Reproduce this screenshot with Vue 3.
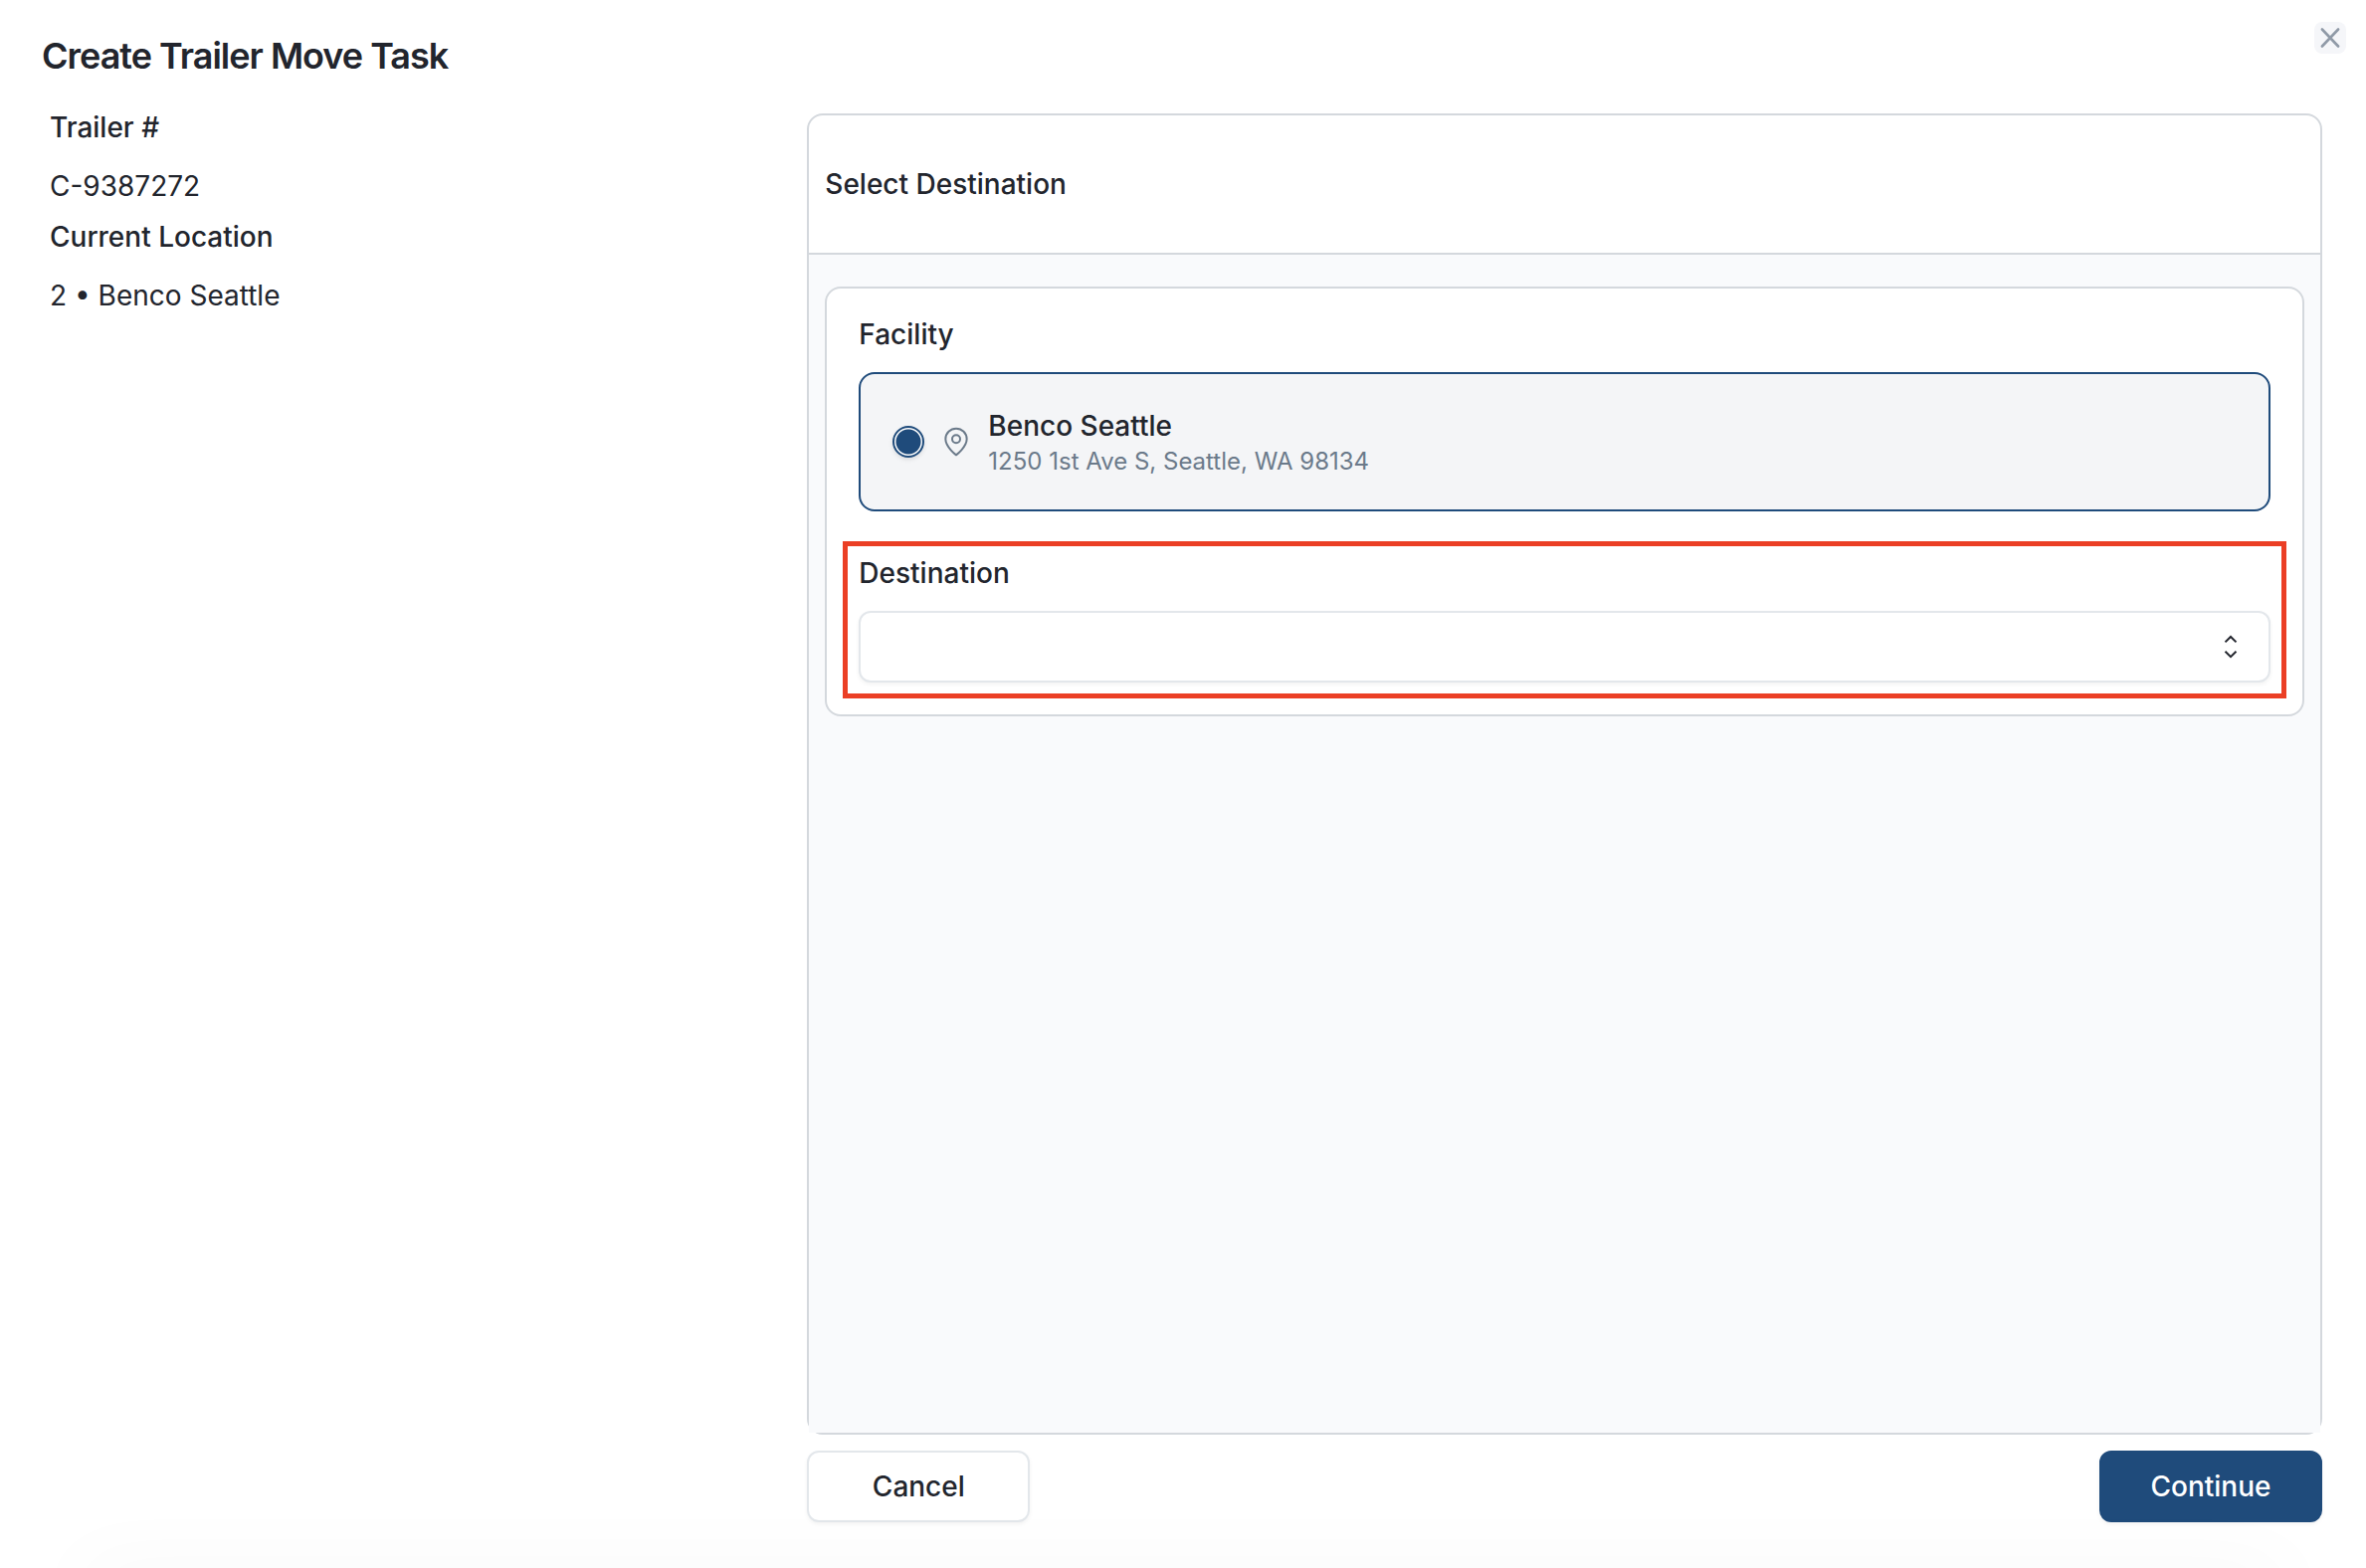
<script setup>
  import { ref } from 'vue'

  const trailer = {
    number: 'C-9387272',
    location: '2 • Benco Seattle'
  }

  const facilities = [
    { id: 1, name: 'Benco Seattle', address: '1250 1st Ave S, Seattle, WA 98134' }
  ]

  const selectedFacility = ref(1)
  const destination = ref('')
</script>

<template>
  <main class="dialog">
    <button class="close" type="button" aria-label="Close">
      <svg viewBox="0 0 32 32" fill="none" stroke="currentColor" stroke-width="2.6" stroke-linecap="round">
        <path d="M7.9 7.5 L24.1 24.5 M24.1 7.5 L7.9 24.5" />
      </svg>
    </button>

    <h1>Create Trailer Move Task</h1>

    <div class="columns">
      <dl class="details">
        <dt>Trailer #</dt>
        <dd>{{ trailer.number }}</dd>
        <dt>Current Location</dt>
        <dd>{{ trailer.location }}</dd>
      </dl>

      <form class="form" @submit.prevent>
        <section class="panel">
          <h2>Select Destination</h2>

          <div class="panel-body">
            <div class="card">
              <h3>Facility</h3>
              <label
                v-for="facility in facilities"
                :key="facility.id"
                class="facility"
                :class="{ selected: facility.id === selectedFacility }"
              >
                <input v-model="selectedFacility" type="radio" name="facility" :value="facility.id">
                <svg class="pin" viewBox="0 0 24 24" fill="none" stroke="currentColor" stroke-width="1.5" stroke-linejoin="round">
                  <path d="M20 10c0 6-8 12-8 12s-8-6-8-12a8 8 0 0 1 16 0Z" />
                  <circle cx="12" cy="10" r="3" />
                </svg>
                <span class="facility-text">
                  <span class="name">{{ facility.name }}</span>
                  <span class="address">{{ facility.address }}</span>
                </span>
              </label>

              <div class="destination">
                <label for="destination">Destination</label>
                <div class="select-wrap">
                  <select id="destination" v-model="destination">
                    <option value=""></option>
                  </select>
                  <svg class="chevrons" viewBox="0 0 32 32" fill="none" stroke="currentColor" stroke-width="2">
                    <path d="M10.5 11.4 L16 6 L21.5 11.4 M10.5 20.8 L16 26.2 L21.5 20.8" />
                  </svg>
                </div>
              </div>
            </div>
          </div>
        </section>

        <footer>
          <button class="btn" type="button">Cancel</button>
          <button class="btn primary" type="submit">Continue</button>
        </footer>
      </form>
    </div>
  </main>
</template>

<style>
  body {
    margin: 0;
    background: #fff;
  }
</style>

<style scoped>
  * {
    box-sizing: border-box;
  }

  .dialog {
    position: relative;
    display: flex;
    flex-direction: column;
    min-height: 100vh;
    padding: 36px 44px 46px 42px;
    overflow: hidden;
    font-family: Inter, "Liberation Sans", sans-serif;
    font-size: 28px;
    line-height: 40px;
    color: #22252d;

    /* soft shade along the bottom edge */
    &::after {
      content: '';
      position: absolute;
      inset: 100% 80px auto;
      height: 40px;
      box-shadow: 0 0 80px rgba(0, 0, 0, .04);
      pointer-events: none;
    }
  }

  h1, h2, h3, dl, dd {
    margin: 0;
  }

  h1 {
    font-size: 36px;
    font-weight: 600;
    line-height: 40px;
    letter-spacing: -1px;
  }

  h2, h3, dt {
    font-size: 28px;
    font-weight: 500;
  }

  .close {
    position: absolute;
    top: 22px;
    right: 20px;
    width: 32px;
    height: 32px;
    padding: 0;
    border: 0;
    border-radius: 8px;
    background: #f5f6f9;
    color: #909aa7;
    cursor: pointer;

    & svg {
      display: block;
    }
  }

  .columns {
    flex: 1;
    display: grid;
    grid-template-columns: repeat(3, 1fr);
    gap: 16px;
    padding-top: 38px;
  }

  .details {
    padding: 0 8px;

    & dt {
      line-height: 28px;
    }

    & dd {
      padding: 24px 0 16px;
      line-height: 42px;
    }
  }

  .form {
    grid-column: span 2;
    display: flex;
    flex-direction: column;
    gap: 16px;
  }

  .panel {
    flex: 1;
    display: flex;
    flex-direction: column;
    border: 2px solid #d4d8dd;
    border-radius: 16px;

    & h2 {
      padding: 48px 16px;
      border-bottom: 2px solid #d4d8dd;
      line-height: 42px;
    }
  }

  .panel-body {
    flex: 1;
    padding: 32px 16px;
    background: #f9fafc;
  }

  .card {
    padding: 26px 32px 32px;
    border: 2px solid #d4d8dd;
    border-radius: 16px;
    background: #fff;

    & h3 {
      margin-bottom: 18px;
    }
  }

  .facility {
    display: flex;
    align-items: center;
    gap: 16px;
    padding: 32px;
    border: 2px solid #d4d8dd;
    border-radius: 16px;
    cursor: pointer;

    &.selected {
      border-color: #1f4b7b;
      background: #f4f5f7;
    }

    & input {
      appearance: none;
      width: 32px;
      height: 32px;
      margin: 0;
      border: 2px solid #1f4b7b;
      border-radius: 50%;
      background: #fff;
      box-shadow: 0 2px 4px rgba(0, 0, 0, .1);
    }

    & input:checked {
      background: radial-gradient(circle, #1f4b7b 12px, #fff 13px);
    }
  }

  .pin {
    width: 32px;
    height: 32px;
    color: #6b7a8a;
  }

  .facility-text {
    display: flex;
    flex-direction: column;
  }

  .name {
    font-weight: 500;
    line-height: 40px;
  }

  .address {
    font-size: 24px;
    line-height: 32px;
    color: #6b7a8a;
  }

  .destination {
    margin: 30px -16px -16px;
    padding: 7px 11px 11px;
    border: 5px solid #eb3f25;

    & label {
      display: block;
      margin-bottom: 18px;
      font-weight: 500;
    }
  }

  .select-wrap {
    position: relative;

    & select {
      display: block;
      appearance: none;
      width: 100%;
      height: 72px;
      padding: 0 80px 0 24px;
      border: 2px solid #e3e7eb;
      border-radius: 12px;
      background: #fff;
      box-shadow: 0 2px 4px rgba(0, 0, 0, .05);
      font: inherit;
      color: inherit;
    }
  }

  .chevrons {
    position: absolute;
    top: 20px;
    right: 24px;
    width: 32px;
    height: 32px;
    pointer-events: none;
  }

  footer {
    display: flex;
    justify-content: space-between;
  }

  .btn {
    width: 224px;
    height: 72px;
    border: 2px solid #e3e7eb;
    border-radius: 12px;
    background: #fff;
    box-shadow: 0 2px 4px rgba(0, 0, 0, .05);
    font: inherit;
    font-weight: 500;
    color: inherit;
    cursor: pointer;

    &.primary {
      border-color: #1f4b7b;
      background: #1f4b7b;
      color: #fff;
    }
  }
</style>
